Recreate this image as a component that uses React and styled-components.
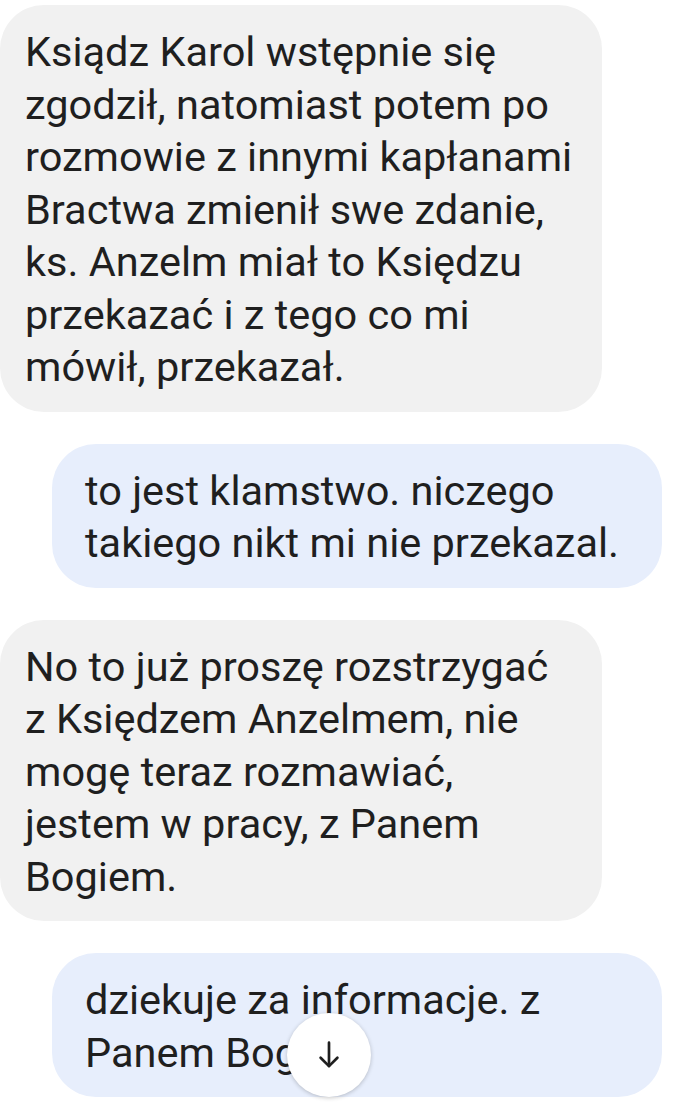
import React from 'react';
import styled, { createGlobalStyle } from 'styled-components';

const GlobalStyle = createGlobalStyle`
  html, body {
    margin: 0;
    padding: 0;
    background: #fff;
  }
  body {
    font-family: Roboto, "Noto Sans", "Liberation Sans", sans-serif;
    color: #1f1f1f;
  }
`;

const Thread = styled.div`
  position: relative;
  width: 680px;
  height: 1116px;
  overflow: hidden;
  display: flex;
  flex-direction: column;
  gap: 32px;
  padding-top: 5px;
  box-sizing: border-box;
`;

const Row = styled.div`
  display: flex;
  justify-content: ${(p) => (p.$out ? 'flex-end' : 'flex-start')};
  padding-right: ${(p) => (p.$out ? '18px' : '0')};
`;

const Bubble = styled.div`
  box-sizing: border-box;
  width: ${(p) => (p.$out ? '610px' : '602px')};
  background: ${(p) => (p.$out ? '#e7eefc' : '#f1f1f1')};
  border-radius: 44px;
  padding: ${(p) => (p.$out ? '21px 16px 18px 33px' : '21px 16px 18px 25px')};
  font-size: 41.5px;
  line-height: 52.5px;
  white-space: pre-line;
`;

const ScrollButton = styled.button`
  position: absolute;
  left: 287px;
  top: 1013px;
  width: 84px;
  height: 84px;
  border: none;
  border-radius: 50%;
  background: #fff;
  box-shadow: 0 1px 4px rgba(0, 0, 0, 0.22);
  display: flex;
  align-items: center;
  justify-content: center;
  color: #1f1f1f;
  padding: 0;
`;

const ArrowDown = () => (
  <svg width="36" height="36" viewBox="0 0 24 24" fill="none" stroke="currentColor" strokeWidth="1.8" strokeLinecap="round" strokeLinejoin="round">
    <path d="M12 3.8v15.6" />
    <path d="M6.4 13.8l5.6 5.6 5.6-5.6" />
  </svg>
);

const messages = [
  {
    out: false,
    text: 'Ksiądz Karol wstępnie się\nzgodził, natomiast potem po\nrozmowie z innymi kapłanami\nBractwa zmienił swe zdanie,\nks. Anzelm miał to Księdzu\nprzekazać i z tego co mi\nmówił, przekazał.',
  },
  {
    out: true,
    text: 'to jest klamstwo. niczego\ntakiego nikt mi nie przekazal.',
  },
  {
    out: false,
    text: 'No to już proszę rozstrzygać\nz Księdzem Anzelmem, nie\nmogę teraz rozmawiać,\njestem w pracy, z Panem\nBogiem.',
  },
  {
    out: true,
    text: 'dziekuje za informacje. z\nPanem Bogiem',
  },
];

export default function App() {
  return (
    <>
      <GlobalStyle />
      <Thread>
        {messages.map((m, i) => (
          <Row key={i} $out={m.out}>
            <Bubble $out={m.out}>{m.text}</Bubble>
          </Row>
        ))}
        <ScrollButton aria-label="Przewiń w dół">
          <ArrowDown />
        </ScrollButton>
      </Thread>
    </>
  );
}
